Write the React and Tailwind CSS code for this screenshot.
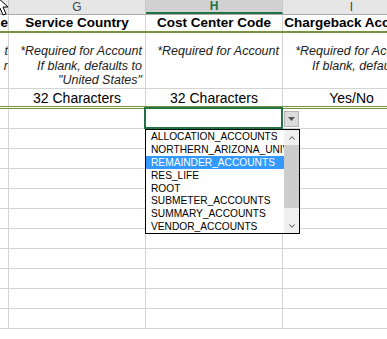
import { ChevronUp, ChevronDown } from 'lucide-react';

const OPTIONS = [
  'ALLOCATION_ACCOUNTS',
  'NORTHERN_ARIZONA_UNIVERSITY',
  'REMAINDER_ACCOUNTS',
  'RES_LIFE',
  'ROOT',
  'SUBMETER_ACCOUNTS',
  'SUMMARY_ACCOUNTS',
  'VENDOR_ACCOUNTS',
];

const EMPTY_ROWS = 11;

function Cursor() {
  return (
    <svg className="absolute left-[-5px] top-[-5px]" width="18" height="22" viewBox="0 0 18 22">
      <polygon
        points="1,1 1,17 5,13 8,20 11,19 8,12 13,12"
        fill="white"
        stroke="black"
        strokeWidth="1"
      />
    </svg>
  );
}

function Dropdown() {
  return (
    <div className="absolute left-[-1px] top-[20px] w-[155px] h-[105px] border border-black bg-white flex z-10">
      <div className="flex-1 flex flex-col overflow-hidden">
        {OPTIONS.map((opt, i) => (
          <div
            key={opt}
            className={`h-[13px] leading-[13px] pl-[5px] whitespace-nowrap overflow-hidden text-[10.2px] ${
              i === 2 ? 'bg-[#3399ff] text-white' : 'text-black'
            }`}
          >
            {opt}
          </div>
        ))}
      </div>
      <div className="w-[15px] bg-[#f0f0f0] flex flex-col items-center">
        <div className="h-[15px] flex items-center justify-center">
          <ChevronUp size={10} strokeWidth={2.5} className="text-[#606060]" />
        </div>
        <div className="w-full h-[63px] bg-[#cdcdcd]" />
        <div className="flex-1" />
        <div className="h-[15px] flex items-center justify-center">
          <ChevronDown size={10} strokeWidth={2.5} className="text-[#606060]" />
        </div>
      </div>
    </div>
  );
}

export default function App() {
  return (
    <div className="relative w-[387px] h-[339px] overflow-hidden bg-white font-['Liberation_Sans',Arial,sans-serif]">
      <div className="w-[420px]">
        {/* Column letters */}
        <div className="flex h-[15px] bg-[#e6e6e6] border-b border-[#ababab] text-[12px] text-[#444] leading-none">
          <div className="w-[9px] border-r border-[#c8c8c8]" />
          <div className="w-[137px] border-r border-[#c8c8c8] flex items-center justify-center">G</div>
          <div className="w-[137px] border-r border-[#c8c8c8] bg-[#d2d2d2] border-b-2 border-b-[#217346] flex items-center justify-center font-bold text-[#217346]">H</div>
          <div className="w-[137px] flex items-center justify-center">I</div>
        </div>

        {/* Header labels */}
        <div className="flex h-[18px] border-b-2 border-[#77933c] text-[13.5px] font-bold text-black leading-none">
          <div className="w-[9px] border-r border-[#d4d4d4] flex items-center justify-end overflow-hidden">e</div>
          <div className="w-[137px] border-r border-[#d4d4d4] flex items-center justify-center">Service Country</div>
          <div className="w-[137px] border-r border-[#d4d4d4] flex items-center justify-center">Cost Center Code</div>
          <div className="w-[137px] flex items-center justify-center whitespace-nowrap">Chargeback Account</div>
        </div>

        {/* Notes */}
        <div className="flex h-[56px] border-b border-[#d4d4d4] text-[12.5px] italic text-[#222] leading-[14.5px]">
          <div className="w-[9px] border-r border-[#d4d4d4] pt-[11px] flex flex-col items-end overflow-hidden">
            <span>t</span>
            <span>r</span>
          </div>
          <div className="w-[137px] border-r border-[#d4d4d4] pt-[11px] pr-[3px] text-right">
            <div>*Required for Account</div>
            <div>If blank, defaults to</div>
            <div>"United States"</div>
          </div>
          <div className="w-[137px] border-r border-[#d4d4d4] pt-[11px] pr-[3px] text-right">
            <div>*Required for Account</div>
          </div>
          <div className="w-[137px] pt-[11px] pr-[3px] text-right whitespace-nowrap">
            <div>*Required for Account</div>
            <div>If blank, defaults to</div>
          </div>
        </div>

        {/* Lengths */}
        <div className="flex h-[20px] border-b-[3px] border-double border-[#77933c] text-[14px] text-black leading-none">
          <div className="w-[9px] border-r border-[#d4d4d4]" />
          <div className="w-[137px] border-r border-[#d4d4d4] flex items-center justify-center">32 Characters</div>
          <div className="w-[137px] border-r border-[#d4d4d4] flex items-center justify-center">32 Characters</div>
          <div className="w-[137px] flex items-center justify-center">Yes/No</div>
        </div>

        {/* Empty rows */}
        {Array.from({ length: EMPTY_ROWS }).map((_, r) => (
          <div key={r} className="flex h-[20px] border-b border-[#d4d4d4]">
            <div className="w-[9px] border-r border-[#d4d4d4]" />
            <div className="w-[137px] border-r border-[#d4d4d4]" />
            <div className="relative w-[137px] border-r border-[#d4d4d4]">
              {r === 0 && (
                <>
                  <div className="absolute left-[-2px] top-[-2px] w-[139px] h-[22px] border-2 border-[#217346] z-10" />
                  <div className="absolute left-[138px] top-[2px] w-[15px] h-[16px] bg-[#dcdcdc] border border-[#b4b4b4] flex items-center justify-center z-10">
                    <svg width="7" height="4" viewBox="0 0 7 4">
                      <polygon points="0,0 7,0 3.5,4" fill="#555" />
                    </svg>
                  </div>
                  <Dropdown />
                </>
              )}
            </div>
            <div className="w-[137px]" />
          </div>
        ))}
      </div>
      <Cursor />
    </div>
  );
}
